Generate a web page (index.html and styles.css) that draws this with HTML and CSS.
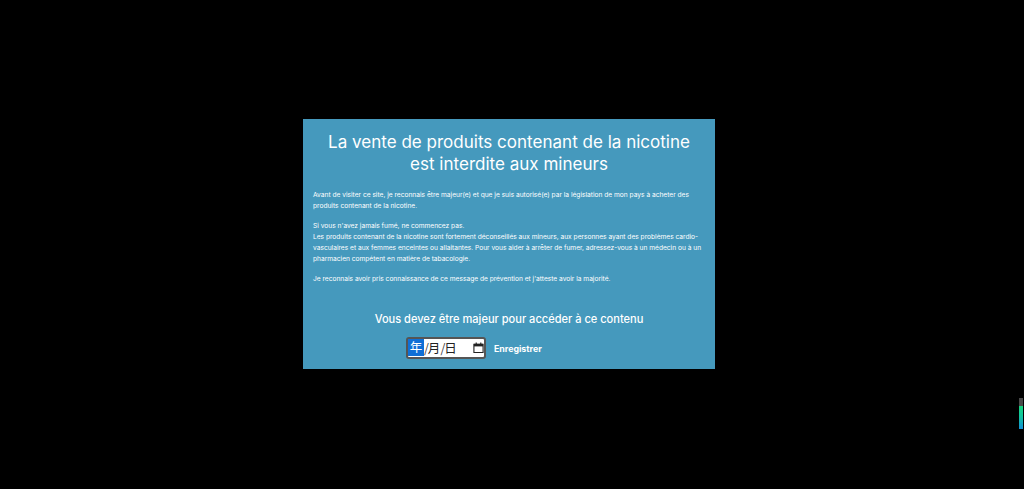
FILE: index.html
```html
<!DOCTYPE html>
<html lang="fr">
<head>
<meta charset="utf-8">
<title>Vérification de l'âge</title>
<link rel="stylesheet" href="styles.css">
</head>
<body>
<main class="modal">
  <h1 class="title">La vente de produits contenant de la nicotine est interdite aux mineurs</h1>
  <div class="copy">
    <p>Avant de visiter ce site, je reconnais être majeur(e) et que je suis autorisé(e) par la législation de mon pays à acheter des produits contenant de la nicotine.</p>
    <p>Si vous n'avez jamais fumé, ne commencez pas.<br>Les produits contenant de la nicotine sont fortement déconseillés aux mineurs, aux personnes ayant des problèmes cardio-vasculaires et aux femmes enceintes ou allaitantes. Pour vous aider à arrêter de fumer, adressez-vous à un médecin ou à un pharmacien compétent en matière de tabacologie.</p>
    <p>Je reconnais avoir pris connaissance de ce message de prévention et j'atteste avoir la majorité.</p>
  </div>
  <h2 class="subtitle">Vous devez être majeur pour accéder à ce contenu</h2>
  <form class="form">
    <div class="date">
      <span class="seg seg-active">年</span><span class="sep">/</span><span class="seg">月</span><span class="sep">/</span><span class="seg">日</span>
      <svg class="cal" viewBox="0 0 12 12" width="11" height="11" aria-hidden="true"><path d="M1 2.5h10v9h-10z" fill="none" stroke="#222" stroke-width="1.2"/><path d="M1 2h10v2.8h-10z" fill="#222"/><path d="M3.5 .5v2M8.5 .5v2" stroke="#222" stroke-width="1.2"/></svg>
    </div>
    <button class="save" type="button">Enregistrer</button>
  </form>
</main>
<div class="meter"></div>
</body>
</html>
```

FILE: styles.css
```css
* { box-sizing: border-box; }
html, body { height: 100%; margin: 0; }
body {
  background: #000;
  color: #fff;
  font-family: Inter, "Liberation Sans", sans-serif;
  display: flex;
  align-items: center;
  justify-content: center;
  padding: 0 6px 1px 0;
  overflow: hidden;
}
.modal {
  width: 412px;
  height: 250px;
  background: #4599bd;
  padding: 12px 10px 0;
  display: flex;
  flex-direction: column;
}
.title {
  margin: 0 auto;
  width: 380px;
  font-size: 17.05px;
  line-height: 22px;
  font-weight: 400;
  text-align: center;
}
.copy { margin-top: 15px; font-size: 6.62px; line-height: 11px; }
.copy p { margin: 0 0 9px; }
.subtitle {
  margin: 17px 0 0;
  font-size: 11.05px;
  line-height: 16px;
  font-weight: 500;
  text-align: center;
}
.form {
  display: flex;
  align-items: center;
  margin: 10px 0 0 93px;
  gap: 8px;
}
.date {
  width: 80px;
  height: 22px;
  background: #fff;
  border: 2px solid #555;
  border-radius: 3px;
  color: #222;
  display: flex;
  align-items: center;
  padding: 0 0 1px 0;
  font-family: "Noto Sans CJK SC", sans-serif;
  font-size: 12.5px;
  line-height: 16px;
}
.seg { width: 13px; text-align: center; }
.seg-active { background: #0f6fd6; color: #fff; width: 16px; height: 17px; }
.sep { width: 3.5px; text-align: center; color: #444; }
.cal { margin-left: auto; }
.save {
  background: none;
  border: 0;
  padding: 0;
  color: #fff;
  font: 700 8.8px Inter, "Liberation Sans", sans-serif;
}
.meter {
  position: fixed;
  left: 1019px;
  top: 398px;
  width: 4px;
  height: 31px;
  background: linear-gradient(#4a4a4a 0 8px, #17d67f 8px, #12c4a0 60%, #1490d8);
}
```
